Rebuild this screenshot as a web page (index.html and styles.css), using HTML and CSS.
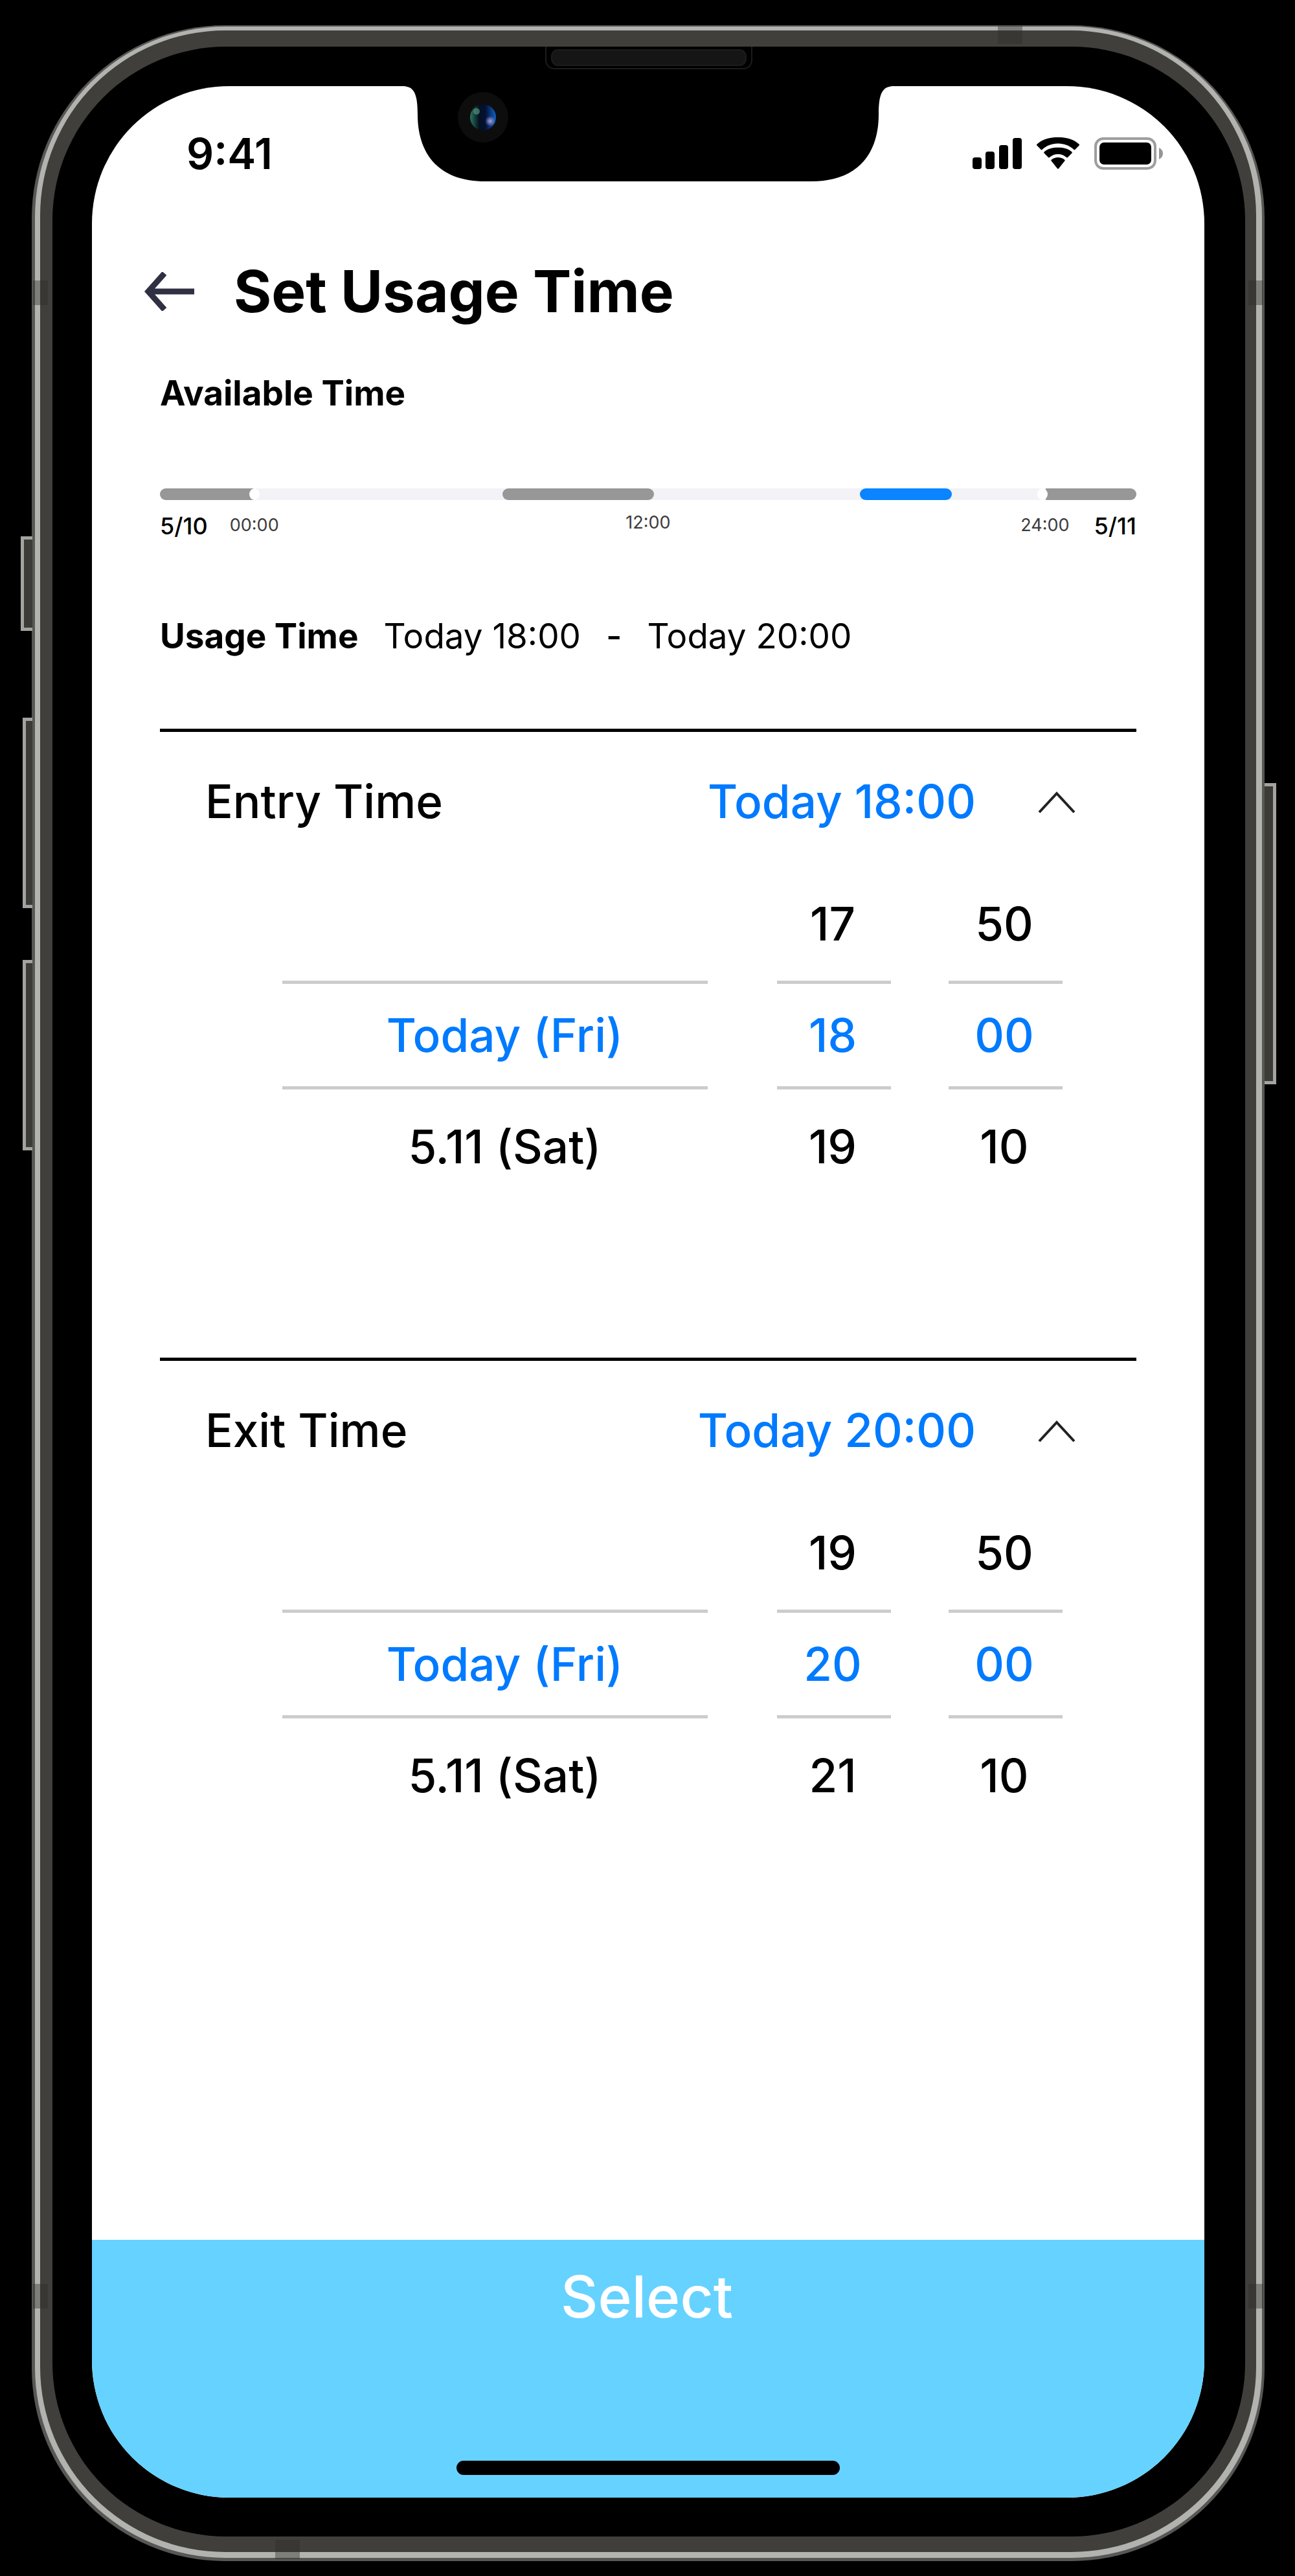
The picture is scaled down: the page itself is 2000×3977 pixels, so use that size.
FILE: index.html
```html
<!DOCTYPE html>
<html lang="en">
<head>
<meta charset="utf-8">
<meta name="viewport" content="width=device-width, initial-scale=1">
<title>Set Usage Time</title>
<link rel="stylesheet" href="styles.css">
</head>
<body>
<div class="device">
  <span class="key key-mute"></span>
  <span class="key key-up"></span>
  <span class="key key-down"></span>
  <span class="key key-power"></span>
  <div class="rim">
    <div class="band">
      <div class="bezel">
        <div class="screen">
          <div class="status">
            <span class="clock">9:41</span>
            <div class="status-icons">
              <svg width="76" height="50" viewBox="0 0 76 50" aria-label="Signal">
                <rect x="0" y="31" width="14" height="18" rx="4"/>
                <rect x="20" y="22" width="14" height="27" rx="4"/>
                <rect x="41" y="12" width="14" height="37" rx="4"/>
                <rect x="62" y="1" width="14" height="48" rx="4"/>
              </svg>
              <svg width="68" height="50" viewBox="0 0 68 50" aria-label="Wi-Fi">
                <path d="M34 9.500C43.500 9.500 52 13 58.500 19C59 19.500 59.800 19.500 60.300 19L66.600 12.600C67.200 12 67.200 11.200 66.600 10.700C57.800 2.500 46.400 0 34 0C21.600 0 10.200 2.500 1.400 10.700C0.800 11.200 0.800 12 1.400 12.600L7.700 19C8.200 19.500 9 19.500 9.500 19C16 13 24.500 9.500 34 9.500Z"/>
                <path d="M34 26C39 26 43.700 27.900 47.200 31C47.700 31.500 48.500 31.500 49 31L55.400 24.600C56 24 56 23.200 55.400 22.600C49.700 17.400 42 15.800 34 15.800C26 15.800 18.300 17.400 12.600 22.600C12 23.200 12 24 12.600 24.600L19 31C19.500 31.500 20.300 31.500 20.800 31C24.300 27.900 29 26 34 26Z"/>
                <path d="M44.300 36.500C44.900 35.900 44.900 35.200 44.300 34.700C38.500 29.700 29.500 29.700 23.700 34.700C23.100 35.200 23.100 35.900 23.700 36.500L33 48.200C33.600 48.800 34.400 48.800 35 48.200Z"/>
              </svg>
              <svg width="108" height="50" viewBox="0 0 108 50" aria-label="Battery">
                <rect x="2" y="2" width="92" height="46" rx="12" fill="none" stroke="#000" stroke-opacity=".38" stroke-width="4"/>
                <rect x="8" y="8" width="80" height="34" rx="7"/>
                <path d="M100 16C104 18 106 21 106 25C106 29 104 32 100 34Z" fill-opacity=".42"/>
              </svg>
            </div>
          </div>

          <header class="header">
            <a class="back" href="#" aria-label="Back">
              <svg width="78" height="60" viewBox="0 0 78 60"><path d="M31 2L6 30L31 58M6 30H77" fill="none" stroke="#2f3142" stroke-width="9"/></svg>
            </a>
            <h1>Set Usage Time</h1>
          </header>

          <main class="content">
            <h2 class="label">Available Time</h2>
            <div class="track">
              <span class="busy busy-start" style="left:0;width:9.6%"></span>
              <span class="busy" style="left:35.1%;width:15.5%"></span>
              <span class="busy chosen" style="left:71.7%;width:9.4%"></span>
              <span class="busy busy-end" style="left:90.7%;width:9.3%"></span>
              <span class="midnight" style="left:9.7%"></span>
              <span class="midnight" style="left:90.4%"></span>
            </div>
            <div class="scale">
              <div class="scale-start"><span class="day">5/10</span><span class="hour">00:00</span></div>
              <span class="noon">12:00</span>
              <div class="scale-end"><span class="hour">24:00</span><span class="day">5/11</span></div>
            </div>
            <div class="usage">
              <h2 class="label">Usage Time</h2>
              <span>Today 18:00</span><span class="dash">-</span><span>Today 20:00</span>
            </div>

            <section class="time">
              <button class="time-head" type="button" aria-expanded="true">
                <span>Entry Time</span>
                <span class="value">Today 18:00</span>
                <svg width="58" height="36" viewBox="0 0 58 36"><path d="M2 35L29 6L56 35" fill="none" stroke="#222" stroke-width="4"/></svg>
              </button>
              <div class="picker">
                <div class="wheel wheel-date">
                  <span class="option"></span>
                  <button class="option selected" type="button">Today (Fri)</button>
                  <button class="option" type="button">5.11 (Sat)</button>
                </div>
                <div class="wheel">
                  <button class="option" type="button">17</button>
                  <button class="option selected" type="button">18</button>
                  <button class="option" type="button">19</button>
                </div>
                <div class="wheel">
                  <button class="option" type="button">50</button>
                  <button class="option selected" type="button">00</button>
                  <button class="option" type="button">10</button>
                </div>
              </div>
            </section>

            <section class="time">
              <button class="time-head" type="button" aria-expanded="true">
                <span>Exit Time</span>
                <span class="value">Today 20:00</span>
                <svg width="58" height="36" viewBox="0 0 58 36"><path d="M2 35L29 6L56 35" fill="none" stroke="#222" stroke-width="4"/></svg>
              </button>
              <div class="picker">
                <div class="wheel wheel-date">
                  <span class="option"></span>
                  <button class="option selected" type="button">Today (Fri)</button>
                  <button class="option" type="button">5.11 (Sat)</button>
                </div>
                <div class="wheel">
                  <button class="option" type="button">19</button>
                  <button class="option selected" type="button">20</button>
                  <button class="option" type="button">21</button>
                </div>
                <div class="wheel">
                  <button class="option" type="button">50</button>
                  <button class="option selected" type="button">00</button>
                  <button class="option" type="button">10</button>
                </div>
              </div>
            </section>
          </main>

          <button class="select" type="button">Select</button>
          <span class="home"></span>
          <svg class="notch" width="780" height="148" viewBox="0 0 780 148">
            <defs>
              <linearGradient id="lens" x1="0" x2="1">
                <stop offset="0" stop-color="#2c7560"/><stop offset=".35" stop-color="#04101e"/>
                <stop offset=".6" stop-color="#031236"/><stop offset="1" stop-color="#1260c8"/>
              </linearGradient>
              <radialGradient id="flare"><stop offset="0" stop-color="#a9a0d8"/><stop offset="1" stop-color="#a9a0d8" stop-opacity="0"/></radialGradient>
            </defs>
            <path d="M0 0H10C28 0 34 10 34 44C34 104 66 147 138 147H642C714 147 746 104 746 44C746 10 752 0 770 0H780Z"/>
            <circle cx="135" cy="48" r="39" fill="#0d0d0d"/>
            <circle cx="135" cy="48" r="20" fill="url(#lens)"/>
            <circle cx="146" cy="54" r="8" fill="url(#flare)"/>
            <circle cx="125" cy="39" r="5" fill="#5fa08c" fill-opacity=".6"/>
          </svg>
        </div>
        <span class="speaker"></span>
      </div>
    </div>
  </div>
  <span class="antenna antenna-top"></span>
  <span class="antenna antenna-bottom"></span>
  <span class="antenna antenna-side left upper"></span>
  <span class="antenna antenna-side right upper"></span>
  <span class="antenna antenna-side left lower"></span>
  <span class="antenna antenna-side right lower"></span>
</div>
</body>
</html>
```
FILE: styles.css
```css
* { box-sizing: border-box; }

body {
  margin: 0;
  min-height: 100vh;
  display: flex;
  padding: 39px 47px 23px 49px;
  background: #000;
  color: #000;
  font-family: Inter, "Liberation Sans", sans-serif;
  font-weight: 400;
}

h1, h2 { margin: 0; }

button {
  margin: 0;
  padding: 0;
  border: 0;
  background: none;
  color: inherit;
  font: inherit;
  cursor: pointer;
}

svg { display: block; flex: none; }

/* Phone body: nested rings, from the outer edge inwards */
.device {
  position: relative;
  flex: 1;
  display: flex;
  padding: 2px 4px 5px 5px;
  border-radius: 298px;
  background: #575755;
}

.rim {
  flex: 1;
  display: flex;
  padding: 6px 9px 9px 8px;
  border-radius: 294px;
  background: #b2b2af;
}

.band {
  flex: 1;
  display: flex;
  padding: 25px 17px 24px 19px;
  border-radius: 286px;
  background: #403f3b;
}

.bezel {
  position: relative;
  flex: 1;
  display: flex;
  padding: 61px 63px 60px 61px;
  border-radius: 268px;
  background: #000;
}

.screen {
  position: relative;
  flex: 1;
  display: flex;
  flex-direction: column;
  overflow: hidden;
  border-radius: 212px;
  background: #fff;
}

.key {
  position: absolute;
  left: -14px;
  width: 15px;
  height: 294px;
  border: 5px solid #a3a3a0;
  border-right: 0;
  background: #3c3b37;
}

.key-mute { top: 789px; left: -17px; width: 18px; height: 146px; }
.key-up { top: 1069px; }
.key-down { top: 1443px; }

.key-power {
  top: 1170px;
  right: -18px;
  left: auto;
  width: 18px;
  height: 465px;
  border: 5px solid #a3a3a0;
  border-left: 0;
}

.antenna { position: absolute; background: rgba(45, 45, 40, .4); }
.antenna-top { top: 1px; right: 374px; width: 38px; height: 28px; }
.antenna-bottom { bottom: 3px; left: 376px; width: 38px; height: 30px; }
.antenna-side { width: 23px; height: 38px; }
.left { left: 2px; }
.right { right: 2px; }
.upper { top: 394px; }
.lower { bottom: 390px; }

.speaker {
  position: absolute;
  top: 0;
  left: 50%;
  width: 320px;
  height: 35px;
  margin-left: -160px;
  border: 2px solid #1c1c1c;
  border-top: 0;
  border-radius: 0 0 14px 14px;
}

.speaker::before {
  content: "";
  display: block;
  height: 22px;
  margin: 4px 7px;
  border: 2px solid #1c1c1c;
  border-radius: 11px;
  background: #151515;
}

.notch {
  position: absolute;
  top: 0;
  left: 50%;
  margin-left: -390px;
}

/* Status bar */
.status {
  display: flex;
  justify-content: space-between;
  align-items: center;
  height: 208px;
  padding: 0 62px 0 146px;
}

.clock { font-size: 66px; font-weight: 600; }

.status-icons {
  display: flex;
  align-items: center;
  gap: 22px;
}

.header {
  display: flex;
  align-items: center;
  gap: 60px;
  height: 130px;
  margin-top: 44px;
  padding-left: 81px;
}

.header h1 { font-size: 89px; font-weight: 700; line-height: 128px; }

.content { padding: 60px 105px 0; }

.label { font-size: 53px; font-weight: 700; line-height: 64px; }

/* Availability timeline */
.track {
  position: relative;
  height: 18px;
  margin-top: 115px;
  border-radius: 9px;
  background: #f2f2f7;
}

.busy {
  position: absolute;
  height: 18px;
  border-radius: 9px;
  background: #979797;
}

.busy-start { border-radius: 9px 0 0 9px; }
.busy-end { border-radius: 0 9px 9px 0; }
.chosen { background: #0a84ff; }

.midnight {
  position: absolute;
  width: 16px;
  height: 18px;
  margin-left: -8px;
  border-radius: 50%;
  background: #fff;
}

.scale {
  display: grid;
  grid-template-columns: 1fr auto 1fr;
  margin-top: 18px;
  font-size: 27px;
}

.scale-start, .scale-end { display: flex; gap: 34px; }
.scale-end { justify-content: flex-end; gap: 38px; }
.day { font-size: 36px; font-weight: 500; line-height: 44px; }
.hour { color: #3c3c3c; line-height: 42px; }
.noon { color: #3c3c3c; line-height: 34px; }

.usage {
  display: flex;
  align-items: center;
  gap: 39px;
  margin-top: 116px;
  font-size: 53px;
  line-height: 64px;
}

.dash { font-weight: 500; }

/* Entry and exit pickers */
.time {
  margin-top: 111px;
  padding: 47px 0 127px;
  border-top: 5px solid #000;
  font-size: 71px;
  font-weight: 500;
}

.time-head {
  display: flex;
  align-items: center;
  width: 100%;
  height: 120px;
  padding: 0 94px 0 70px;
}

.value {
  margin: 0 96px 0 auto;
  color: #007aff;
}

.picker {
  display: flex;
  gap: 89px;
  margin-top: 41px;
  padding: 0 114px 0 189px;
}

.wheel {
  display: flex;
  flex-direction: column;
  width: 176px;
}

.wheel-date {
  flex: 1;
  margin-right: 18px;
}

.option { height: 176px; padding-right: 4px; text-align: center; }

.wheel-date .option { padding: 0 0 0 30px; }

.selected {
  height: 168px;
  border: solid #ccc;
  border-width: 5px 0;
  color: #007aff;
}

.select {
  display: flex;
  justify-content: center;
  width: 100%;
  height: 398px;
  margin-top: auto;
  padding: 32px 4px 0 0;
  background: #66d2ff;
  color: #fff;
  font-size: 89px;
  font-weight: 500;
  line-height: 112px;
}

.home {
  position: absolute;
  bottom: 35px;
  left: 50%;
  width: 592px;
  height: 22px;
  margin-left: -296px;
  border-radius: 11px;
  background: #000;
}
```
